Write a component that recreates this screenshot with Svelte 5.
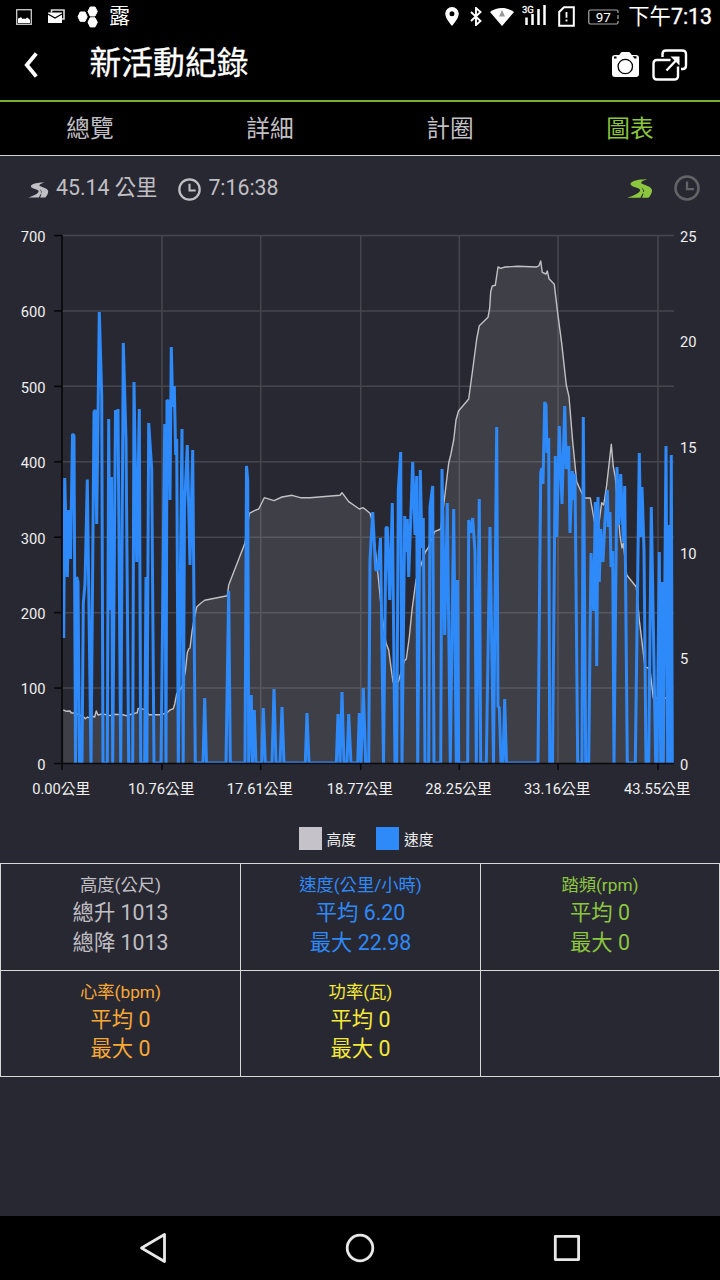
<script lang="ts">
  type Stat = {
    title: string;
    lines: string[];
    tone: string;
  };

  const TABS = ['總覽', '詳細', '計圈', '圖表'];
  const activeTab = '圖表';

  const STATS: Stat[] = [
    { title: '高度(公尺)', lines: ['總升 1013', '總降 1013'], tone: 'grey' },
    { title: '速度(公里/小時)', lines: ['平均 6.20', '最大 22.98'], tone: 'blue' },
    { title: '踏頻(rpm)', lines: ['平均 0', '最大 0'], tone: 'green' },
    { title: '心率(bpm)', lines: ['平均 0', '最大 0'], tone: 'orange' },
    { title: '功率(瓦)', lines: ['平均 0', '最大 0'], tone: 'yellow' },
    { title: '', lines: [], tone: 'grey' },
  ];

  // Plot area
  const LEFT = 62;
  const RIGHT = 674;
  const TOP = 235.5;
  const BOTTOM = 763.5;

  const ALTITUDE_TICKS = [0, 100, 200, 300, 400, 500, 600, 700];
  const SPEED_TICKS = [0, 5, 10, 15, 20, 25];
  const DISTANCE_TICKS = [
    { x: 62, label: '0.00公里' },
    { x: 162, label: '10.76公里' },
    { x: 260.7, label: '17.61公里' },
    { x: 360.7, label: '18.77公里' },
    { x: 459.3, label: '28.25公里' },
    { x: 558, label: '33.16公里' },
    { x: 658, label: '43.55公里' },
  ];

  function altitudeY(value: number): number {
    return BOTTOM - (value / 700) * (BOTTOM - TOP);
  }

  function speedY(value: number): number {
    return BOTTOM - (value / 25) * (BOTTOM - TOP);
  }

  const ALTITUDE =
    '63.3,710 66.7,711.3 70,711 71.3,713 75,713 79,715 82.7,716 85.3,718.7 87.7,717 89.3,718 91.7,716 94.7,717 96.3,711 98,715 ' +
    '102,714 106.7,714.7 110,715.7 113.3,714.3 122.7,714.7 126.7,715.7 132,714 137.3,712.7 138,708.7 140,708.3 145,709.7 149,714.7 ' +
    '161,714.7 166.7,713 170,710 173.3,708.7 174.7,704 176.7,694 182,687 185.3,671.7 187.3,652.7 188.7,649 190,648 192,631.7 ' +
    '194.3,618 196.7,607 201,603 204.7,600.3 227.3,595.7 228.7,585 245,543 249.3,513.3 255,510.3 258.7,509 264.3,497.7 274,500.7 ' +
    '282,497 292,495.3 300.3,497.7 310,497.7 340,495.3 342,492.7 348.7,501.7 359.3,509 363.3,507.7 370,513.3 371.7,519 377.3,567 ' +
    '381.7,613 386,643 388.7,650 393,682 398.3,682 404.3,661 406.3,659 409.3,637 412,610 416,580 421.7,563 425.3,552 428.3,547.7 ' +
    '434.7,531.7 440.7,529 444.3,500 448.7,463 450.7,455 453.7,440 456,420 458.5,411 468.7,399 473.3,365 476.7,339 479.3,325.7 ' +
    '488,317.3 489.7,308 490.7,291.7 492.3,286 495.3,285.3 498,267 500.7,268.3 505,267 517.7,266.3 536.7,267 539,265.7 540.7,261 ' +
    '542.3,272.3 546,274 547.3,271 549,278.7 554.3,284.3 557.3,310 561.7,343.3 566.3,385 569,396.7 572.7,441.7 576.7,481.7 ' +
    '584,498 590.3,498 594.7,523 599,523 601.7,502.7 603.7,505 606.7,485 611.3,444.3 613.3,466.7 615.3,477 620,535 622,548 ' +
    '623.3,543 626.7,575 636.3,587 639.3,620 645,666.7 650,669 653.3,698 666.7,698 668.3,692.7 672,692';

  const SPEED =
    '63.7,638 64.7,478 67.3,577 68.7,510 70.5,559 72.5,434 74,436 75.5,763 76.7,577 78,582 79.5,763 82,763 83.3,603 85,584 ' +
    '87.3,479.5 91,763 94,412 95.3,410 96.7,524 99.3,312 101.7,395 103,763 107.3,763 108.7,419 110,610 111.5,477 112.7,763 ' +
    '115.5,410 117,442 118,409 120.7,763 123.3,343 126,439 128.7,763 132.7,763 134,382 136.7,562 139.3,409 140.7,763 144.7,763 ' +
    '146,577 146.9,763 148.7,423 151.7,469 154,763 161,763 164.7,424 166,763 167,400 168.7,402 170,500 171.3,347 172.7,407 ' +
    '174.3,386 175.7,455 176.7,439 178.3,763 182,429 183.2,763 184.5,508 187.3,445 190,565 192.7,450 195.3,763 203,763 ' +
    '204.7,698 206.5,763 226,763 228.7,591 230.3,763 245,763 246.5,466 247.7,480 248.7,763 251.3,695 252.5,763 254.3,710 256,763 ' +
    '261.7,763 263.3,708 265.3,763 272,763 274,689 276,763 280,763 282,707 284,763 305.3,763 307,713 309,763 336.3,763 338,714 ' +
    '340,763 342,692 344,763 347,763 348.7,714 351,763 357.7,763 359.3,713 361,763 363.3,688 365.7,763 368.7,763 370,560 ' +
    '372.7,512 375.7,570 378,570 380.5,538 383.5,763 386,528 387.3,527 389.7,600 392.3,503 395,763 396.7,763 398.3,490 ' +
    '400.7,452 402,763 404.7,516 406,552 407.3,519 408.7,577 412.7,462 415,535 416.7,476 417.7,763 420.3,470 422,548 423.3,518 ' +
    '425,763 428.7,763 430,507 432.7,486 434,763 440.7,763 442,469 444.7,635 447.3,503 450.3,763 453.7,509 456.3,763 ' +
    '457.5,580 458.7,763 467.7,763 468.7,520 470.3,533 472.7,518 475,552 476.3,763 479.3,499 480.7,763 486.3,763 490,527 ' +
    '493.5,763 496.7,427 498,707 499.3,707 501,763 503,763 504.7,699 506.5,763 538,763 540.7,473 541.7,468 543,484 544.7,402 ' +
    '546,405 547,453 548.7,438 549.7,763 552.5,763 555.3,456 556.7,537 559.3,426 562,504 564.7,406 566.3,469 568.7,446 ' +
    '570,533 572.3,471 573.7,500 575,474 577.7,763 582,763 583.3,417 585.7,763 588.7,763 591,553 593.7,611 595.3,502 ' +
    '596.7,666 598,497 599.3,582 600.7,529 603,562 605,520 607.3,490 608.3,527 610,512 611,567 612.7,551 614,763 617,467 ' +
    '619,525 620.7,474 623.3,542 624.7,486 627.3,763 635.3,763 639.3,453 640.7,537 642,487 644,550 646,763 648.7,763 ' +
    '651.3,507 655.7,763 657,763 659.3,552 660.7,763 662,582 663.3,763 666,446 667.7,763 669,525 670,763 671.3,455 672.3,763';

  const altitudeArea = `63.3,${BOTTOM} ${ALTITUDE} 672,${BOTTOM}`;
</script>

{#snippet road()}
  <svg class="road" viewBox="0 0 26 19">
    <path
      fill="currentColor"
      d="M20.500.2C15 .2 8 .8 4.500 3.200 2.800 4.600 3.500 6.200 6 7.400 9 8.700 13 9.200 13.200 11 13.200 13.800 6 17.200.3 18.700H13.500L15.600 14.500 16.600 14.800 15 18.700H21.500C23.500 16.500 25.300 13.500 25 11 24.500 7.800 19 6.500 15.500 5 12.500 3.600 15 1.600 20.500.2Z"
    />
    <path d="M14.800 9.300C16.500 10.300 17 11.500 16.500 13" fill="none" stroke="#282832" stroke-width=".8" />
  </svg>
{/snippet}

{#snippet clock()}
  <svg class="clock" viewBox="0 0 26 26" fill="none" stroke="currentColor" stroke-width="2.600">
    <circle cx="13" cy="13" r="11.500" />
    <path d="M13 6.500V14.200H20" stroke-width="2.300" />
  </svg>
{/snippet}

<div class="screen">
  <div class="status-bar">
    <div class="notifications">
      <svg width="16" height="16" viewBox="0 0 16 16">
        <rect x=".7" y=".7" width="14.600" height="14.600" fill="none" stroke="#ccc" stroke-width="1.300" />
        <path d="M2 14V9.500L3.500 9 5 8 6.500 10 8 9.500 9.500 10 11 8.500 12.500 9.500 14 11V14Z" fill="#fff" />
      </svg>
      <svg class="mail" width="17" height="15" viewBox="0 0 17 15">
        <path d="M3.500 3.500V1H16V10H14" fill="none" stroke="#ddd" stroke-width="1.600" />
        <path d="M0 3.500H14V14H0Z" fill="#fff" />
        <path d="M0 5 7 9 14 5" fill="none" stroke="#000" stroke-width="1.300" />
      </svg>
      <svg class="hex" width="22" height="22" viewBox="0 0 22 22" fill="#fff" stroke="#fff" stroke-linejoin="round">
        <path d="M3.200 6H8L10.200 10.700 8 15.300H3.200L1 10.700Z" />
        <path d="M13.200 1H18L20.300 5.500 18 10H13.200L11 5.500Z" />
        <path d="M13.200 11.800H18L20.300 16.300 18 20.900H13.200L11 16.300Z" />
      </svg>
      <span class="app-glyph">露</span>
    </div>
    <div class="system">
      <svg width="14" height="19" viewBox="0 0 14 19">
        <path d="M7 0A6.800 6.800 0 0 0 .2 6.800C.2 11.500 7 19 7 19S13.800 11.500 13.800 6.800A6.800 6.800 0 0 0 7 0ZM7 9.300A2.500 2.500 0 1 1 7 4.300 2.500 2.500 0 0 1 7 9.300Z" fill="#fff" />
      </svg>
      <svg class="bluetooth" width="12" height="19" viewBox="0 0 12 19" fill="none" stroke="#fff" stroke-width="1.900">
        <path d="M1 5 10.500 14 6 18V1L10.500 5 1 14" />
      </svg>
      <svg class="wifi" width="24" height="18" viewBox="0 0 24 18">
        <path d="M0 4C7-1.200 17-1.200 24 4L12 18Z" fill="#fff" />
        <path d="M12 2 15 8.500H9Z" fill="#999" />
      </svg>
      <svg class="signal" width="25" height="22" viewBox="0 0 25 22">
        <text x="0" y="8.500" font-size="9.500" fill="#fff" stroke="#fff" stroke-width=".3">3G</text>
        <path d="M4.500 21V13.500M10.500 21V10M16.500 21V5M22.500 21V1" stroke="#fff" stroke-width="2.500" />
      </svg>
      <svg class="sim" width="17" height="21" viewBox="0 0 17 21" fill="none" stroke="#fff">
        <path d="M6 1.200H15.800V19.800H1.200V6Z" stroke-width="2" />
        <path d="M8.500 6V11.800M8.500 13.500V15.500" stroke-width="1.800" />
      </svg>
      <svg class="battery" width="32" height="16" viewBox="0 0 32 16">
        <path d="M30 4V2.500Q30 1 28.500 1H2.200Q.8 1 .8 2.500V13.500Q.8 15 2.200 15H28.500Q30 15 30 13.500V12M30 6V10" fill="none" stroke="#aaa" stroke-width="1.200" />
        <text x="15.300" y="12.700" text-anchor="middle" font-size="13.500" fill="#fff">97</text>
      </svg>
      <span class="time">下午<b>7:13</b></span>
    </div>
  </div>

  <header>
    <svg class="back" width="14" height="26" viewBox="0 0 14 26">
      <path d="M12.300 1.500 2.800 13 12.300 24.500" fill="none" stroke="#fff" stroke-width="3.800" />
    </svg>
    <h1>新活動紀錄</h1>
    <svg class="camera" width="27" height="25" viewBox="0 0 27 25">
      <path d="M3 3H7.200L9 .6Q9.400 0 10.200 0H16.800Q17.600 0 18 .6L19.800 3H24Q27 3 27 6V22Q27 25 24 25H3Q0 25 0 22V6Q0 3 3 3Z" fill="#fff" />
      <circle cx="13.300" cy="14.500" r="7.200" fill="none" stroke="#000" stroke-width="1.300" />
      <path d="M2 4.500H4.500V6.500H2ZM20.500 4.300H24.500V6.600H22.500Z" fill="#000" />
    </svg>
    <svg class="share" width="36" height="32" viewBox="0 0 36 32" fill="none" stroke="#fff" stroke-width="2.400">
      <path d="M10.500 8V5Q10.500 1.500 14 1.500H30Q34 1.500 34 5V16.500Q34 20 30.500 20H29" />
      <path d="M18.500 11H5Q1.500 11 1.500 14.500V27Q1.500 30.500 5 30.500H22Q26 30.500 26 27V17.500" />
      <path d="M14.500 21.500 24 11.500" />
      <path d="M18.500 7.500H27.500V16.500Z" fill="#fff" stroke="none" />
    </svg>
  </header>

  <nav class="tabs">
    {#each TABS as tab}
      <button class:active={tab === activeTab}>{tab}</button>
    {/each}
  </nav>

  <section class="summary">
    <span class="item distance">{@render road()}45.14 公里</span>
    <span class="item duration">{@render clock()}7:16:38</span>
    <span class="axis-mode">
      <span class="by-distance">{@render road()}</span>
      <span class="by-time">{@render clock()}</span>
    </span>
  </section>

  <svg class="chart" width="720" height="590" viewBox="0 220 720 590">
    <clipPath id="plot">
      <rect x={LEFT} y={TOP} width={RIGHT - LEFT} height={BOTTOM - TOP} />
    </clipPath>

    <!-- Grid -->
    <g stroke="#47464f" stroke-width="1.500">
      {#each ALTITUDE_TICKS.slice(1) as tick}
        <line x1={LEFT} y1={altitudeY(tick)} x2={RIGHT} y2={altitudeY(tick)} />
      {/each}
      {#each DISTANCE_TICKS.slice(1) as tick}
        <line x1={tick.x} y1={TOP} x2={tick.x} y2={BOTTOM} />
      {/each}
    </g>

    <g clip-path="url(#plot)">
      <polygon points={altitudeArea} fill="#c5c3c9" fill-opacity="0.150" />
      <polyline class="altitude" points={ALTITUDE} />
      <polyline class="speed" points={SPEED} />
    </g>

    <!-- Axes -->
    <g stroke="#08080b" stroke-width="1.600">
      <line x1={LEFT} y1={TOP - 0.5} x2={LEFT} y2={BOTTOM} />
      <line x1={LEFT} y1={BOTTOM} x2={RIGHT} y2={BOTTOM} />
      {#each ALTITUDE_TICKS as tick}
        <line x1={LEFT - 8} y1={altitudeY(tick)} x2={LEFT} y2={altitudeY(tick)} />
      {/each}
      {#each DISTANCE_TICKS as tick}
        <line x1={tick.x} y1={BOTTOM} x2={tick.x} y2={BOTTOM + 6.500} />
      {/each}
    </g>

    <g class="labels">
      {#each ALTITUDE_TICKS as tick}
        <text x="45.500" y={altitudeY(tick) + 6.300} text-anchor="end">{tick}</text>
      {/each}
      {#each SPEED_TICKS as tick}
        <text x="680" y={speedY(tick) + 6.300}>{tick}</text>
      {/each}
      {#each DISTANCE_TICKS as tick}
        <text x={tick.x - 0.8} y="794" text-anchor="middle">{tick.label}</text>
      {/each}
    </g>
  </svg>

  <div class="legend">
    <span class="key"><i class="swatch grey"></i>高度</span>
    <span class="key"><i class="swatch blue"></i>速度</span>
  </div>

  <section class="stats">
    {#each STATS as stat}
      <div class="cell {stat.tone}">
        <div class="title">{stat.title}</div>
        {#each stat.lines as line}
          <div class="value">{line}</div>
        {/each}
      </div>
    {/each}
  </section>

  <div class="nav-bar">
    <svg width="28" height="32" viewBox="0 0 28 32">
      <path d="M25.500 2.500V29.500L2.500 16Z" fill="none" stroke="#e8e8e8" stroke-width="2.800" stroke-linejoin="round" />
    </svg>
    <svg width="30" height="30" viewBox="0 0 30 30">
      <circle cx="15" cy="15" r="12.800" fill="none" stroke="#e8e8e8" stroke-width="2.800" />
    </svg>
    <svg width="28" height="28" viewBox="0 0 28 28">
      <rect x="2.300" y="2.300" width="23.300" height="23.300" fill="none" stroke="#e8e8e8" stroke-width="2.800" stroke-linejoin="round" />
    </svg>
  </div>
</div>

<style>
  :global(body) {
    background: #000;
  }

  .screen {
    display: flex;
    flex-direction: column;
    width: 720px;
    height: 1280px;
    overflow: hidden;
    background: #282832;
    color: #c0bfc4;
    font-family: Roboto, 'Noto Sans CJK TC', sans-serif;
  }

  svg {
    display: block;
    flex: none;
  }

  .status-bar {
    display: flex;
    justify-content: space-between;
    height: 33px;
    padding: 0 8px 0 16px;
    background: #000;
    color: #fff;
  }

  .notifications,
  .system {
    display: flex;
    align-items: center;
  }

  .mail {
    margin-left: 16px;
  }

  .hex {
    margin-left: 12px;
  }

  .app-glyph {
    margin-left: 10px;
    font-size: 21px;
    line-height: 33px;
  }

  .bluetooth {
    margin-left: 11px;
  }

  .wifi {
    margin-left: 8px;
  }

  .signal {
    margin: -4px 0 0 8px;
  }

  .sim {
    margin: -1px 0 0 11px;
  }

  .battery {
    margin-left: 13px;
  }

  .time {
    margin-left: 8px;
    font-size: 21.300px;
    line-height: 33px;
    white-space: nowrap;
  }

  .time b {
    font-weight: 400;
    -webkit-text-stroke: 0.400px #fff;
  }

  header {
    display: flex;
    align-items: center;
    box-sizing: border-box;
    height: 69px;
    padding: 0 32px 4px 24px;
    border-bottom: 2px solid #77b02c;
    background: #000;
  }

  h1 {
    flex: 1;
    margin: 0 0 3px 51.500px;
    color: #fff;
    font-size: 31.800px;
    line-height: 46px;
    font-weight: 400;
    -webkit-text-stroke: 0.300px #fff;
  }

  .camera {
    margin-right: 13px;
  }

  .tabs {
    display: grid;
    grid-template-columns: repeat(4, 1fr);
    box-sizing: border-box;
    height: 54px;
    border-bottom: 1.500px solid #d0d0d0;
    background: #000;
  }

  .tabs button {
    padding: 0 0 4px;
    border: 0;
    background: none;
    color: #c0bfc4;
    font: inherit;
    font-size: 23.700px;
  }

  .tabs .active {
    color: #8cc63e;
  }

  .summary {
    display: flex;
    align-items: center;
    height: 64px;
    padding: 0 20px 0 28px;
    font-size: 21.300px;
  }

  .item {
    display: flex;
    align-items: center;
    gap: 7px;
    height: 32px;
    line-height: 32px;
    white-space: nowrap;
  }

  .duration {
    margin-left: 21px;
  }

  .distance .road {
    width: 21px;
    height: 16px;
    margin-top: 3px;
  }

  .duration .clock {
    width: 23px;
    height: 23px;
    margin-top: 3px;
  }

  .axis-mode {
    display: flex;
    align-items: center;
    gap: 21px;
    margin-left: auto;
  }

  .by-distance {
    color: #8cc63e;
  }

  .by-distance .road {
    width: 26px;
    height: 19px;
  }

  .by-time {
    color: #626267;
  }

  .by-time .clock {
    width: 26px;
    height: 26px;
  }

  .altitude {
    fill: none;
    stroke: #c2c1c6;
    stroke-width: 1.400;
    stroke-linejoin: round;
  }

  .speed {
    fill: none;
    stroke: #2e8af9;
    stroke-width: 3;
    stroke-linejoin: bevel;
  }

  .labels {
    fill: #f0f0f0;
    font-size: 14.700px;
  }

  .legend {
    display: flex;
    justify-content: center;
    gap: 20px;
    height: 53px;
    padding-left: 12px;
    box-sizing: border-box;
    color: #f0f0f0;
    font-size: 14.700px;
  }

  .key {
    display: flex;
    align-items: center;
    gap: 5px;
    height: 56px;
  }

  .swatch {
    width: 23px;
    height: 23px;
  }

  .swatch.grey {
    background: #c5c3c9;
  }

  .swatch.blue {
    background: #2e8af9;
  }

  .stats {
    display: grid;
    grid-template-columns: 240px 240px 239px;
    grid-template-rows: 106.500px 106.500px;
    border-top: 1px solid #d8d8d8;
    border-left: 1px solid #d8d8d8;
  }

  .cell {
    box-sizing: border-box;
    padding-top: 8px;
    border-right: 1px solid #d8d8d8;
    border-bottom: 1px solid #d8d8d8;
    text-align: center;
  }

  .title {
    font-size: 17.300px;
    line-height: 26px;
  }

  .value {
    font-size: 21.300px;
    line-height: 29.500px;
  }

  .cell.blue {
    color: #2e8af9;
  }

  .cell.green {
    color: #8cc63e;
  }

  .cell.orange {
    color: #f9a835;
  }

  .cell.yellow {
    color: #f5e93a;
  }

  .nav-bar {
    display: flex;
    align-items: center;
    justify-content: space-between;
    box-sizing: border-box;
    height: 64px;
    margin-top: auto;
    padding: 0 139px;
    background: #000;
  }
</style>
